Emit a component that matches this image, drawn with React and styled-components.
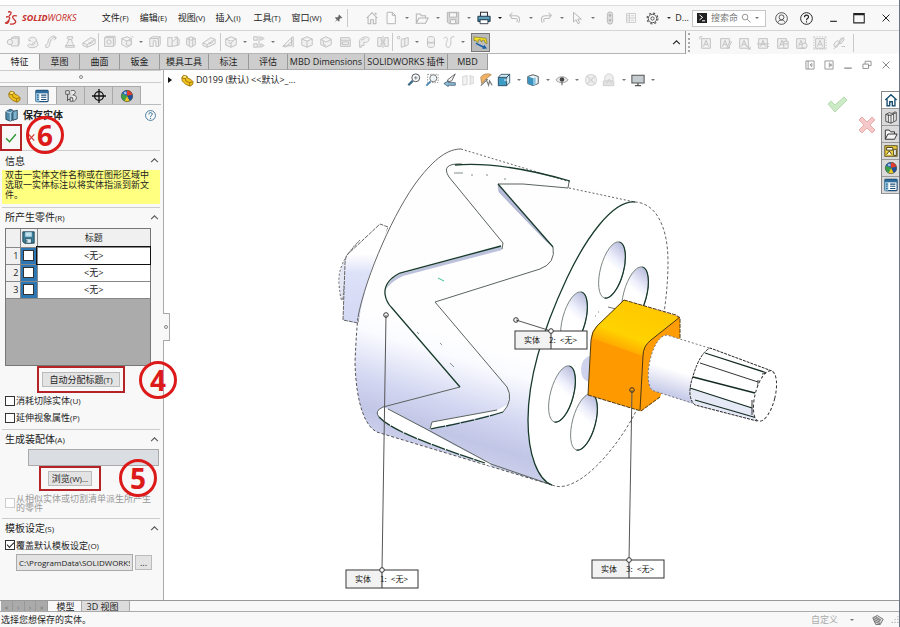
import React from "react";
import styled, { createGlobalStyle, css } from "styled-components";

const sans = '"Open Sans", "Noto Sans CJK SC", sans-serif';

const GlobalStyle = createGlobalStyle`
  *, *::before, *::after { box-sizing: border-box; }
  body { margin: 0; background: #fff; color: #222; font: 9px/12px ${sans}; }
  button, input { font: inherit; color: inherit; }
  h1, h2, p { margin: 0; font: inherit; }
`;

/* ---------- drawings ---------- */

const g = "#c2c2c2";
const ball = (
  <>
    <circle cx="8" cy="8" r="6.5" fill="#2f8f3f" />
    <path d="M8 8 2 5.500A6.500 6.500 0 0 1 8 1.500z" fill="#2b66c0" />
    <path d="M8 8V1.500A6.500 6.500 0 0 1 14.300 6.500z" fill="#e23a2c" />
    <path d="M8 8l6.300-1.500A6.500 6.500 0 0 1 11 13.800z" fill="#1f4f9c" />
    <path d="M8 8l3 5.800A6.500 6.500 0 0 1 5 13.800z" fill="#f2c522" />
    <path d="M2 5.500 8 8l-3 5.800A6.500 6.500 0 0 1 2 5.500z" fill="#3ba24a" />
    <circle cx="6" cy="4.500" r="1.500" fill="#fff" opacity=".6" />
    <circle cx="8" cy="8" r="6.500" fill="none" stroke="#555" strokeWidth=".7" />
  </>
);
const list = (
  <>
    <rect x="1" y="1.500" width="14" height="13" rx="1" fill="#fff" stroke="#1e4f78" strokeWidth="1.300" />
    <path d="M1 2h14v3H1z" fill="#2e6e9e" />
    <path d="M1 5h4v9.500H1z" fill="#8fc0dd" />
    <path d="M2.500 7h1.500M2.500 9.500h1.500M2.500 12h1.500M7 7h6M7 9.500h6M7 12h6" stroke="#1e4f78" strokeWidth="1.200" />
  </>
);
const part = (
  <>
    <path d="M2 5.500 4 2.500l4 1 1 2.500 3 1 3 3-.5 3-3 2-5-2-4-4z" fill="#f0c11d" stroke="#8f6a07" strokeWidth=".9" />
    <path d="M2 5.500l4 1 1 3 4 1.500 3.500-1M11 11v4M6 6.500 8 3.500" fill="none" stroke="#8f6a07" strokeWidth=".9" />
    <path d="M3.500 5 5 3.200l2.500.6L6 5.800z" fill="#ffe98a" />
  </>
);
const folder = "M1.500 14V3.500h4.500l1.500 2H12v2.500M1.500 14 4.500 8H15l-3 6z";
const cube = "M8 2l6 2.500v7L8 14l-6-2.500v-7zM2 4.500 8 7l6-2.500M8 7v7";
const note = (extra) => (
  <>
    <path d="M3 3h10v11H3z" />
    <path d="M5 12 8 5l3 7M6 9.500h4" />
    {extra}
  </>
);

const LINE = {
  boss: <><path d="M6 3.500h8v9H6zM6 3.500 9 2h6v9l-1 1.500" /><path d="M1 8h6M5 6l2 2-2 2" /><circle cx="4.500" cy="8" r="3" /></>,
  revolve: <><path d="M4 6c0-4 9-5 9 0 0 3-5 2-5 5M4 6l3 1M13 6l2 5c-1 4-11 5-12 1l2-2c2 2 6 2 6-1" /></>,
  sweep: <path d="M2 14c5 1 4-3 5-6s3-6 7-5M2 11c3 0 2-2 3-5s4-5 7-5M2 11v3M12 1l2 2-2 3" />,
  loft: <path d="M5 2h6v2l-1 1c0 4 1 5 3 7v2H3v-2c2-2 3-3 3-7L5 4zM3 12h10M6 5h4" />,
  slab: <path d="M1 9 10 3l5 2v5l-9 4-5-2zM1 9l5 2 9-6M6 11v3M8 8a2 1.500 0 1 0 3-1" />,
  cut: <><path d="M3 3h10v10H3zM3 3l2-1.500h10V11l-2 2" /><circle cx="8" cy="8" r="2.500" /></>,
  hole: <><path d="M8 2l5 2v7l-5 3-6-3V4zM2 4l6 3 5-3" /><circle cx="10" cy="9" r="3" /><path d="M13 1l2 2" /></>,
  arch: <path d="M2 13V4l3-2h9v9l-2 2H9V7c0-1-3-1-3 0v6zM2 4h10v9M12 4l2-2" />,
  draft: <path d="M2 13V3h5v10zM7 8l6-5v9l-6 1M9 3l4-1M13 3l2 2v6l-2 1" />,
  rib: <path d="M3 4l5-2 5 2v7l-5 3-5-3zM6 3v10M10 3v10M3 4l5 2 5-2" />,
  cube: <path d={cube} />,
  cubeR: <><path d={cube} /><path d="M5 8l2 2 4-4" /></>,
  pattern: <path d="M2 2h4v4H2zM2 10h4v4H2zM10 2l4 2-4 2zM10 10l4 2-4 2zM8 1v14" />,
  wing: <path d="M2 13 12 3v9zM5 14l9-8v8M12 3l2-1v4M4 11v3" />,
  shell: <><path d="M2 5l6-3 6 3v6l-6 3-6-3zM2 5l6 3 6-3" /><path d="M5 7v4l3 1.500" /></>,
  wrap: <path d="M3 3h10l1 2v8H3zM3 6h11M5 8h7v3H5zM3 9h2" />,
  flag: <path d="M3 14V6c2-4 9-5 11-2-1 5-4 5-6 4v4H5v2zM5 6l4-2" />,
  mirror: <path d="M2 3v10h4V9h4v4h4V3h-4v4H6V3zM8 1v14" />,
  plane: <><circle cx="3" cy="3" r="1.500" /><path d="M6 5l4-1v9l-4 1zM10 4l4-1v8l-4 2" /></>,
  cyl: <path d="M4 4c0-3 8-3 8 0v8c0 3-8 3-8 0zM4 7c0 2 8 2 8 0M4 9h8" />,
  curve: <path d="M2 4c2-3 5-1 4 2s-3 8 1 8 3-6 3-9 2-3 4-3" fill="none" />,
  a1: note(<path d="M1 1h3M1 1v3" />),
  a2: note(<path d="M10 13l4-7 1.500 1-4 7z" />),
  a3: note(<path d="M10 10l5 5M15 12v3h-3" />),
  a4: note(<path d="M1 9h14M12 12h3" />),
  a5: note(<path d="M10 6h5v8h-5zM10 9h5" />),
  a6: note(<><circle cx="12" cy="11" r="3" /><path d="M6 14h6" /></>),
  a7: note(<path d="M1 1v14M15 1v14M1 1h14M1 15h14" strokeDasharray="1.500 1.500" />),
  link: <path d="M3 8l3-3 3 3-4 5-3-2zM8 6l3-4 3 2-4 5zM2 15 14 1M11 12h4" />,
};

const ART = {
  home: <path d="M2 8l6-6 6 6M3.500 7v7.500h3V10h3v4.500h3V7M11 2.500h1.500v2" fill="none" stroke="#b5b5b5" strokeWidth="1.200" />,
  doc: <path d="M3.500 1.500h6l3.500 3.500v9.500h-9.500zM9.500 1.500V5H13" fill="#fafafa" stroke="#b5b5b5" strokeWidth="1.100" />,
  open: <path d={folder} fill="none" stroke="#b5b5b5" strokeWidth="1.200" />,
  save: <><path d="M1.500 1.500h13v13h-11l-2-2z" fill="#d8d8d8" stroke="#b0b0b0" /><path d="M4 2h8v5H4zM5 10h6v4.500H5z" fill="#f6f6f6" stroke="#b0b0b0" /></>,
  print: <><path d="M4 6V1.500h8V6" fill="#eef6fb" stroke="#333" strokeWidth="1.200" /><path d="M1 6h14v6H1z" fill="#2f7ea0" stroke="#253240" /><path d="M3.500 10h9v4.500h-9z" fill="#fff" stroke="#253240" /><path d="M2 8h12" stroke="#9fd0e4" /></>,
  undo: <path d="M5 2 2 5l3 4M2.500 5.500H9c5 0 5 5 3 8M5 8.500h4c2 0 2 2 1 4" fill="none" stroke="#bdbdbd" strokeWidth="1.200" />,
  redo: <path d="M11 2l3 3-3 4M13.500 5.500H7c-5 0-5 5-3 8M11 8.500H7c-2 0-2 2-1 4" fill="none" stroke="#bdbdbd" strokeWidth="1.200" />,
  cursor: <path d="M4 1.500v11l3-2.500 2 4.500 2-1-2-4.200h4z" fill="none" stroke="#b5b5b5" strokeWidth="1.100" />,
  traffic: <><rect x="5" y="1" width="6" height="14" rx="3" fill="#ddd" stroke="#b5b5b5" /><circle cx="8" cy="5" r="1.500" fill="#b5b5b5" /><circle cx="8" cy="10.500" r="1.500" fill="#b5b5b5" /></>,
  sheet: <path d="M2 2h12v12H2zM6 2v12M2 5h4M2 8h12M2 11h4M8 5h4M8 11h4" fill="none" stroke="#c2c2c2" />,
  gear: <><circle cx="8" cy="8" r="5.200" fill="none" stroke="#555" strokeWidth="1.200" /><circle cx="8" cy="8" r="6.700" fill="none" stroke="#555" strokeWidth="1.400" strokeDasharray="2.600 2.660" /><circle cx="8" cy="8" r="2" fill="none" stroke="#555" strokeWidth="1.200" /></>,
  term: <><rect width="16" height="16" fill="#222" /><path d="M4 3l5 4-5 4M8 12.500h5" fill="none" stroke="#fff" strokeWidth="1.600" /></>,
  search: <><circle cx="6.500" cy="6.500" r="4.500" fill="none" stroke="#777" strokeWidth="1.200" /><path d="M10 10l5 5" stroke="#777" strokeWidth="1.300" /></>,
  user: <><circle cx="8" cy="8" r="7.200" fill="none" stroke="#444" strokeWidth="1.100" /><circle cx="8" cy="6.500" r="3" fill="none" stroke="#444" strokeWidth="1.100" /><path d="M3.500 13c1-4 8-4 9 0" fill="none" stroke="#444" strokeWidth="1.100" /></>,
  help: <><circle cx="8" cy="8" r="7.200" fill="none" stroke="currentColor" strokeWidth="1.200" /><path d="M5.500 6.500c0-3.500 5-3.500 5-.5 0 2-2.500 2-2.500 4M8 11.500v1.500" fill="none" stroke="currentColor" strokeWidth="1.400" /></>,
  min: <path d="M2 13h12" stroke="currentColor" strokeWidth="2" />,
  max: <path d="M1 2h14v12.500H1zM1 3.500h14" fill="none" stroke="currentColor" strokeWidth="1.400" />,
  close: <path d="M2.500 2.500l11 11M13.500 2.500l-11 11" stroke="currentColor" strokeWidth="1.600" />,
  restore: <path d="M1.500 6.500h9v7h-9zM5 6.500v-4.500h9.500v7h-4" fill="none" stroke="currentColor" strokeWidth="1.400" />,
  dockL: <path d="M1.500 1.500h13v13h-13zM5 1.500v13M11 5.500v5L8 8z" fill="none" stroke="currentColor" strokeWidth="1.300" />,
  dockR: <path d="M1.500 1.500h13v13h-13zM8.500 4v8M9 8h4M11 5.500v5" fill="none" stroke="currentColor" strokeWidth="1.300" />,
  pin: <path d="M9 1l6 6-1.500.5-1.500-.5-2.500 2.500.5 3-1.500 1L5.500 10.500 1 15l3.800-5.200L2 7l1-1.500 3 .5L8.500 3.500 8 2z" fill="#666" />,
  measure: <><path d="M1 2l13 1.500 1 5.500-2-.5-1-3h-2l-1 2-1-2.500H6L5 8 3 5.500 1 6z" fill="#f4e02c" stroke="#7c731b" strokeWidth=".7" /><path d="M3 8l8.500 4 .5-1.500 3 4-5 .5.5-1.500L3 9.500z" fill="#1a5fa8" /></>,
  part, list, ball,
  config: <path d="M2 2h4v4H2zM4 6v8M4 12h3M7 10h3v4H7zM8 2c3-1 5 0 5 2s-3 2-3 3c2 0 5 1 4 4s-3 3-4 3" fill="#eee" stroke="#555" strokeWidth="1.100" />,
  target: <><circle cx="8" cy="8" r="5" fill="none" stroke="#111" strokeWidth="1.500" /><path d="M8 0v16M0 8h16" stroke="#111" strokeWidth="1.500" /></>,
  saveBody: <><path d="M1 4l5-2.500 4 1.500v10l-4 2-5-2z" fill="#4d88a8" stroke="#24455a" /><path d="M6 5.500v9.500M1 4l5 1.500L10 3" fill="none" stroke="#cfe5f0" /><path d="M9 4l5-1.500v10L9 14z" fill="#7fb3cd" stroke="#24455a" /></>,
  tick: <path d="M1.500 8.500l4.500 4.500L14.500 3" fill="none" stroke="#2e9a35" strokeWidth="1.900" />,
  cross: <path d="M3 2.500l10 11M13 2.500l-10 11" stroke="#d23a36" strokeWidth="2.200" />,
  chevron: <path d="M2 11l6-6 6 6" fill="none" stroke="currentColor" strokeWidth="1.900" />,
  floppy: <><path d="M1 1h14v14H3l-2-2z" fill="#3b7c99" stroke="#14384a" /><path d="M4 1.500h8V7H4z" fill="#bfe0ec" /><path d="M4.500 9.500h7v5.500h-7z" fill="#d9eef5" stroke="#14384a" strokeWidth=".8" /><path d="M6 11v3" stroke="#14384a" /></>,
  zoomFit: <><circle cx="10" cy="5.500" r="4.500" fill="#f3f8fb" stroke="#555" strokeWidth="1.100" /><path d="M6.500 9 1.500 14" stroke="#3d6a88" strokeWidth="2.600" /><path d="M10 3.500v4M8 5.500h4" stroke="#777" /></>,
  zoomArea: <><path d="M3 1.500h12v9.500H3z" fill="none" stroke="#888" strokeDasharray="1.500 1.500" /><circle cx="9.500" cy="6" r="4" fill="#eef5f9" stroke="#777" strokeWidth="1.100" /><path d="M6.500 9.500 1.500 14.500" stroke="#4a88b0" strokeWidth="2.200" /></>,
  zoomPrev: <><path d="M14 1 5 8l1 2 4-1z" fill="#f4f4f4" stroke="#666" strokeWidth="1.100" /><path d="M1 12l5-3v2h8v3H6v1.500z" fill="#8fbdd6" stroke="#3b5a70" strokeWidth=".9" /></>,
  section: <path d="M2 4l5-1v10l-5 1zM9 3l5 1v8l-5 1M11 4v8" fill="#f2f2f2" stroke="#d0d0d0" />,
  paint: <><path d="M2 5c2-4 9-5 12-3L10 5 6 9 3 12z" fill="#f0b267" stroke="#a5743c" strokeWidth=".8" /><path d="M2 14.500 10 7M8 7l3 7 1-5 3 5" fill="none" stroke="#777" strokeWidth="1.300" /></>,
  orient: <><path d="M1.500 5h9.500v9.500H1.500z" fill="#3f9cc4" stroke="#24455a" /><path d="M1.500 5l3-3.500h10L11 5zM14.500 1.500V11L11 14.500V5z" fill="#cfe8f1" stroke="#24455a" strokeWidth=".9" /><path d="M8 8h5M11.500 6.500 13 8l-1.500 1.500" fill="none" stroke="#fff" /></>,
  shade: <><path d="M2 4l6-2 6 2v8l-6 2.500L2 12z" fill="#e9f5fb" stroke="#444" /><path d="M2 4l6 2v8.500L2 12z" fill="#3c94be" /><path d="M8 6l3-1v8.500l-3 1z" fill="#88c2de" /></>,
  eye: <><path d="M1 8c3-5 11-5 14 0-3 4-11 4-14 0z" fill="#e8e8e8" stroke="#999" /><circle cx="8" cy="7.500" r="2.600" fill="#444" /><path d="M8 10v4" stroke="#666" strokeWidth="1.300" /></>,
  ballGrey: <><circle cx="8" cy="8" r="6.500" fill="#ececec" stroke="#d2d2d2" /><path d="M3 3l10 10M13 3 3 13" stroke="#d2d2d2" strokeWidth="1.500" /></>,
  sceneGrey: <><circle cx="8" cy="6" r="5" fill="#eee" stroke="#cecece" /><path d="M1.500 9h12v5.500h-12zM5 12l3-5 3 5" fill="#e2e2e2" stroke="#cecece" /></>,
  monitor: <><path d="M1 2.500h14v9H1z" fill="#c6cdd1" stroke="#555" strokeWidth="1.200" /><path d="M8 11.500V14M4.500 14.500h7" stroke="#555" strokeWidth="1.500" /></>,
  paneHome: <path d="M1.500 8 8 2l6.500 6M3.500 7v7.500h3V10h3v4.500h3V7" fill="#fff" stroke="#1d4f70" strokeWidth="1.600" />,
  books: <path d="M2 5l4-2 3 1 4-2 1 1v9l-6 3-6-2zM5 5v9M8 6v9M11 4v9M2 5l3 1 3 0 6-3" fill="#eee" stroke="#333" strokeWidth=".9" />,
  paneFolder: <path d={folder} fill="#f4f4f4" stroke="#333" strokeWidth="1.100" />,
  board: <><rect x="1" y="2" width="14" height="12" fill="#f0cf3f" stroke="#4c431a" /><path d="M3 4h7v3H3zM3 12l3-4 3 4M11 6v7h3V6z" fill="#fff" stroke="#4c431a" strokeWidth="1.100" /></>,
  gem: <path d="M1 5l6-3 8 5-4 7-6 0zM3 5l8 4M5 4l7 4M2 7l9 4M3 10l8 3" fill="#ddd" stroke="#555" strokeWidth="1" />,
  grip: <path d="M14 2v2M14 7v2M14 12v2M9 7v2M9 12v2M4 12v2" stroke="#bbb" strokeWidth="2.500" />,
};

const Svg = styled.svg`
  display: block;
  flex: none;
  width: ${(p) => p.$size}px;
  height: ${(p) => p.$size}px;
`;

function Icon({ name, size = 14 }) {
  const line = LINE[name];
  return (
    <Svg viewBox="0 0 16 16" $size={size} aria-hidden="true">
      {line ? <g fill="#f0f0f0" stroke={g} strokeWidth="1.100">{line}</g> : ART[name]}
    </Svg>
  );
}

/* ---------- shared controls ---------- */

const bare = css`
  padding: 0;
  border: 0;
  background: none;
`;
const IconButton = styled.button`
  ${bare}
  display: flex;
  flex: none;
  align-items: center;
  justify-content: center;
  width: ${(p) => p.$w || 18}px;
  height: 18px;
  color: ${(p) => p.$color || "#222"};
`;
const CaretButton = styled.button`
  ${bare}
  flex: none;
  width: ${(p) => p.$w || 10}px;
  height: 18px;
  &::before {
    content: "";
    display: block;
    width: 4px;
    margin: 0 auto;
    border: 2px solid transparent;
    border-top-color: ${(p) => p.$color || "#777"};
    border-bottom: 0;
  }
`;
const Divider = styled.span`
  flex: none;
  width: 1px;
  height: 18px;
  margin: 0 ${(p) => p.$after || 0}px 0 ${(p) => p.$before || 0}px;
  background: #c9c9c9;
`;
const Spacer = styled.span`
  flex: 1;
`;
const Key = styled.span`
  font-size: 8px;
`;

/* ---------- frame ---------- */

const Window = styled.div`
  display: flex;
  flex-direction: column;
  min-height: 100vh;
  padding-top: 5px;
  border-right: 1px solid #6c7380;
  background: #fff;
`;
const TitleBar = styled.header`
  display: flex;
  align-items: center;
  height: 26px;
  border-top: 1px solid #dcdcdc;
  border-bottom: 1px solid #d4d4d4;
  background: #f8f8f8;
`;
const Brand = styled.div`
  display: flex;
  align-items: center;
  gap: 4px;
  width: 96px;
  padding-left: 4px;
  color: #c8332f;
  font: italic 9px/14px "Noto Sans", sans-serif;
  b { font-weight: 700; }
`;
const Logo = styled.svg`
  width: 14px;
  height: 15px;
`;
const MenuButton = styled.button`
  ${bare}
  width: 38px;
  padding-left: 6px;
  text-align: left;
  white-space: nowrap;
`;
const Group = styled.div`
  display: flex;
  align-items: center;
  padding-left: ${(p) => p.$pad || 0}px;
`;
const SearchBox = styled.label`
  display: flex;
  align-items: center;
  width: 74px;
  height: 17px;
  margin: 0 7px 0 3px;
  padding: 0 2px 0 4px;
  border: 1px solid #c6c6c6;
  background: #fff;
  input {
    flex: 1;
    min-width: 0;
    padding: 0 0 0 4px;
    border: 0;
    outline: 0;
    background: none;
  }
  input::placeholder { color: #777; }
`;
const ToolBar = styled.div`
  display: flex;
  align-items: stretch;
  height: 23px;
  background: #f8f8f8;
`;
const FeatureTools = styled.div`
  display: flex;
  flex: 1;
  align-items: center;
  padding-left: 3px;
  border-right: 1px solid #999;
  border-bottom: 1px solid #b5b5b5;
`;
const AnnotationTools = styled.div`
  display: flex;
  align-items: center;
  width: 213px;
  &::before {
    content: "";
    height: 19px;
    margin: 0 6px 0 2px;
    border-left: 2px dotted #aaa;
  }
`;
const ActiveTool = styled(IconButton)`
  width: 19px;
  height: 19px;
  margin-left: 3px;
  border: 1px solid #777;
  background: #bcbcbc;
`;
const TabRow = styled.nav`
  display: flex;
  align-items: stretch;
  height: 16px;
`;
const CommandTab = styled.button`
  padding: 0;
  width: ${(p) => p.$w}px;
  border: 0;
  border-right: 1px solid #999;
  border-bottom: 1px solid ${(p) => (p.$active ? "#f8f8f8" : "#aaa")};
  background: ${(p) => (p.$active ? "#f8f8f8" : "#cdcdcd")};
  line-height: 14px;
  white-space: nowrap;
`;
const DocControls = styled.div`
  display: flex;
  align-items: flex-end;
  gap: 1px;
  margin-left: auto;
  padding-right: 4px;
  ${IconButton} { height: 10px; }
`;
const Main = styled.div`
  display: flex;
  flex: 1;
`;

/* ---------- property panel ---------- */

const Panel = styled.aside`
  position: relative;
  z-index: 1;
  flex: none;
  width: 164px;
  border-right: 1px solid #aaa;
  background: #f8f8f8;
`;
const PanelGrip = styled.div`
  display: flex;
  align-items: center;
  justify-content: center;
  height: 13px;
  margin-right: 2px;
  border-top: 1px solid #ccc;
  border-bottom: 1px solid #ccc;
`;
const Dot = styled.i`
  flex: none;
  width: 4px;
  height: 4px;
  border: 1px solid #888;
  border-radius: 50%;
`;
const PanelTabs = styled.div`
  display: flex;
  margin: 3px 2px 0 0;
  border-bottom: 1px solid #bbb;
`;
const PanelTab = styled.button`
  display: flex;
  align-items: center;
  justify-content: center;
  width: ${(p) => (p.$active ? 29 : 28)}px;
  height: 18px;
  padding: 0;
  border: 1px solid #aaa;
  border-width: 1px 1px 0 0;
  background: ${(p) => (p.$active ? "#f8f8f8" : "#d0d0d0")};
`;
const PanelTitle = styled.div`
  display: flex;
  align-items: center;
  height: 20px;
  padding: 0 7px 0 5px;
  h1 {
    flex: 1;
    padding-left: 4px;
    font-size: 10px;
    font-weight: 700;
  }
`;
const ActionRow = styled.div`
  position: relative;
  display: flex;
  align-items: center;
  height: 25px;
  ${IconButton} { width: 18px; }
`;
const Highlight = styled.div`
  position: relative;
  z-index: 1;
  display: flex;
  flex: none;
  align-items: center;
  justify-content: center;
  width: ${(p) => p.$w}px;
  height: ${(p) => p.$h || 27}px;
  margin-left: ${(p) => p.$left || 0}px;
  border: 2px solid #b52326;
`;
const Step = styled.span`
  position: absolute;
  z-index: 2;
  top: ${(p) => p.$top}px;
  left: ${(p) => p.$left}px;
  width: 38px;
  height: 38px;
  border: 3px solid #dc1a1a;
  border-radius: 50%;
  color: #dc1a1a;
  font: 700 28px/32px "Noto Sans", sans-serif;
  text-align: center;
`;
const Section = styled.section`
  position: relative;
  height: ${(p) => p.$h}px;
  margin: 0 3px 0 2px;
  border-top: 1px solid #ccc;
`;
const SectionHead = styled.div`
  display: flex;
  align-items: center;
  justify-content: space-between;
  height: 19px;
  padding-left: 3px;
  h2 { font-size: 10px; }
  ${IconButton} { width: 12px; }
`;
const Message = styled.div`
  height: 34px;
  padding: 0 3px;
  background: #ffff80;
  line-height: 10px;
`;
const TableFrame = styled.div`
  width: 146px;
  height: 138px;
  margin: 1px 0 0 3px;
  border: 1px solid #777;
  background: #ababab;
`;
const BodyTable = styled.table`
  width: 100%;
  border-collapse: collapse;
  table-layout: fixed;
  background: #fff;
  th, td {
    height: 17px;
    padding: 0;
    border: 1px solid #888;
    border-width: 0 1px 1px 0;
    font-weight: 400;
    line-height: 12px;
    text-align: center;
  }
  tr > :last-child { border-right: 0; }
  thead th, tbody th { background: #f0f0f0; }
  thead th { height: 18px; }
  tbody th { padding-right: 1px; text-align: right; }
  tbody tr:first-child td:last-child { outline: 1px solid #111; }
`;
const IndexCol = styled.col`
  width: 14px;
`;
const SaveCol = styled.col`
  width: 17px;
`;
const SaveCell = styled.td`
  background: #2e77b5;
`;
const HeadIcon = styled.div`
  display: flex;
  justify-content: center;
`;
const Check = styled.input.attrs({ type: "checkbox" })`
  appearance: none;
  display: block;
  flex: none;
  width: ${(p) => p.$size || 10}px;
  height: ${(p) => p.$size || 10}px;
  margin: ${(p) => (p.$size ? "0 auto" : "0")};
  border: 1px solid #333;
  background: #fff;
  &:disabled { border-color: #ccc; }
  &:checked::after {
    content: "";
    display: block;
    width: 7px;
    height: 4px;
    margin: 1px 0 0 1px;
    border: solid #222;
    border-width: 0 0 1px 1px;
    transform: rotate(-45deg);
  }
`;
const CheckLine = styled.label`
  display: flex;
  align-items: center;
  gap: 1px;
  height: ${(p) => p.$h || 17}px;
  padding: 0 8px 0 3px;
  color: ${(p) => (p.$muted ? "#999" : "inherit")};
  line-height: 9px;
`;
const PushButton = styled.button`
  width: ${(p) => p.$w}px;
  height: 15px;
  padding: 0;
  border: 1px solid #bbb;
  background: #e3e3e3;
  line-height: 12px;
  white-space: nowrap;
`;
const TextField = styled.input`
  display: block;
  width: ${(p) => p.$w}px;
  height: 17px;
  margin-left: ${(p) => p.$left || 0}px;
  padding: 0 2px;
  border: 1px solid #aaa;
  background: ${(p) => p.$bg || "#e3e3e3"};
  font-size: 8px;
`;
const PathRow = styled.div`
  display: flex;
  align-items: center;
  gap: 2px;
  padding: 2px 0 0 14px;
`;
const Collapse = styled.button`
  ${bare}
  position: absolute;
  top: 243px;
  right: -7px;
  display: flex;
  align-items: center;
  justify-content: center;
  width: 7px;
  height: 28px;
  border: 1px solid #aaa;
  border-left: 0;
  background: #f8f8f8;
`;

/* ---------- graphics area ---------- */

const Viewport = styled.main`
  position: relative;
  flex: 1;
  min-width: 0;
  background: #fff;
`;
const ViewHeader = styled.div`
  display: grid;
  grid-template-columns: 1fr auto 1fr;
  align-items: center;
  height: 20px;
`;
const TreeRoot = styled.div`
  display: flex;
  align-items: center;
  gap: 2px;
  padding-left: 4px;
  white-space: nowrap;
  &::before {
    content: "";
    margin-right: 6px;
    border: 3px solid transparent;
    border-left: 4px solid #111;
    border-right: 0;
  }
`;
const Scene = styled.svg`
  display: block;
  width: 100%;
  height: auto;
`;
const TaskPane = styled.div`
  position: absolute;
  top: 21px;
  right: 0;
  width: 18px;
  border: 1px solid #888;
  border-width: 1px 0 0 1px;
`;
const PaneButton = styled.button`
  ${bare}
  display: flex;
  align-items: center;
  justify-content: center;
  width: 17px;
  height: 17px;
  border-bottom: 1px solid #999;
  background: ${(p) => (p.$active ? "#fff" : "#dadada")};
`;
const Confirm = styled.div`
  position: absolute;
  top: 24px;
  right: 22px;
  display: grid;
  grid-template-columns: 30px 20px;
  grid-template-rows: 20px 22px;
  align-items: center;
  button { ${bare} }
  button:last-child { grid-area: 2 / 2; }
`;
const Mark = styled.svg`
  display: block;
  width: 20px;
  height: 18px;
`;

/* ---------- bottom bars ---------- */

const BottomTabs = styled.nav`
  display: flex;
  height: 12px;
  border-top: 1px solid #999;
  border-bottom: 1px solid #aaa;
  background: #f8f8f8;
`;
const PageNav = styled.div`
  display: flex;
  width: 47px;
  margin-left: 1px;
  background: #aaa;
`;
const PageButton = styled.button`
  ${bare}
  flex: 1;
  border-right: 1px solid #999;
  color: #777;
  font-size: 8px;
  line-height: 9px;
`;
const BottomTab = styled.button`
  ${bare}
  width: ${(p) => p.$w}px;
  padding-left: ${(p) => (p.$active ? 2 : 0)}px;
  padding-right: ${(p) => (p.$active ? 0 : 6)}px;
  border-right: 1px solid #aaa;
  background: ${(p) => (p.$active ? "#f8f8f8" : "#dcdcdc")};
  line-height: 9px;
`;
const StatusBar = styled.footer`
  display: flex;
  align-items: center;
  height: 15px;
  padding-left: 1px;
  background: #f8f8f8;
`;
const Units = styled.button`
  ${bare}
  color: #aaa;
`;

/* ---------- data ---------- */

const MENUS = [["文件", "F"], ["编辑", "E"], ["视图", "V"], ["插入", "I"], ["工具", "T"], ["窗口", "W"]];
const QUICK = [["doc", "新建"], ["open", "打开"], ["save", "保存"], ["print", "打印"], ["undo", "撤消"], ["redo", "重做"], ["cursor", "选择"]];
const TOOL_GROUPS = [
  { w: 19, items: ["boss", "revolve", "sweep", "loft", "slab"] },
  { w: 18, items: ["cut", "hole", null, "arch", "draft", "rib", "slab"] },
  { w: 18, items: ["cubeR", null, "pattern", null] },
  { w: 19, items: ["wing", "cube", "shell", "wrap", "flag", "mirror"] },
  { w: 18, items: ["plane", null, "cyl", "curve", null] },
];
const NOTES = ["a1", "a2", "a3", "a4", "a5", "a6", "a7", "link"];
const TABS = [["特征", 40], ["草图", 40], ["曲面", 40], ["钣金", 40], ["模具工具", 49], ["标注", 40], ["评估", 39], ["MBD Dimensions", 77], ["SOLIDWORKS 插件", 83], ["MBD", 40]];
const VIEW = ["zoomFit", "zoomArea", "zoomPrev", "section", "paint", "orient", null, "shade", null, "eye", null, "ballGrey", "sceneGrey", null, "monitor", null];
const PANE = ["paneHome", "books", "paneFolder", "board", "ball", "list"];

/* ---------- model ---------- */

const HOLES = [[612, 270], [635, 295], [574, 320], [562, 394], [584, 422]];
const CALLOUTS = [
  { n: 1, x: 346, y: 570, split: 382, from: [386, 315] },
  { n: 2, x: 515, y: 331, split: 551, from: [516, 320] },
  { n: 3, x: 592, y: 560, split: 629, from: [632, 390] },
];

function Model() {
  return (
    <Scene viewBox="164 90 735 509" role="img" aria-label="D0199">
      <defs>
        <linearGradient id="body" gradientUnits="userSpaceOnUse" x1="450" y1="335" x2="412" y2="462">
          <stop offset="0" stopColor="#fefeff" />
          <stop offset=".15" stopColor="#fafbff" />
          <stop offset=".5" stopColor="#d2d6f1" />
          <stop offset=".72" stopColor="#c2c6e6" />
          <stop offset="1" stopColor="#d3d7ef" />
        </linearGradient>
        <linearGradient id="hole" x1=".6" y1="0" x2=".4" y2="1">
          <stop offset="0" stopColor="#b6bada" />
          <stop offset=".3" stopColor="#eceefb" />
          <stop offset=".45" stopColor="#fff" />
        </linearGradient>
        <linearGradient id="gold" gradientUnits="userSpaceOnUse" x1="636" y1="300" x2="612" y2="362">
          <stop offset="0" stopColor="#ffc800" />
          <stop offset=".55" stopColor="#ffd200" />
          <stop offset=".85" stopColor="#ff9a00" />
        </linearGradient>
        <linearGradient id="shaft" gradientUnits="userSpaceOnUse" x1="680" y1="340" x2="663" y2="398">
          <stop offset=".5" stopColor="#fff" />
          <stop offset="1" stopColor="#bcc0e4" />
        </linearGradient>
        <linearGradient id="stub" x1="0" y1="0" x2="0" y2="1">
          <stop offset=".3" stopColor="#fff" />
          <stop offset=".5" stopColor="#dde1f8" />
          <stop offset="1" stopColor="#d3d8f4" />
        </linearGradient>
      </defs>

      <g stroke="#666" strokeWidth="1">
        <path d="M360 240Q337 262 339 284T343 298L347 255z" fill="#e4e6f4" strokeDasharray="2 2" />
        <path d="M388 227 380 224 347 255Q345 259 345 264L343 320 358 323z" fill="url(#stub)" strokeDasharray="4 1" />
      </g>

      <path d="M461 149C432 148 408 188 387 230 367 272 355 325 355 362 356 405 366 430 380 433L552 485 635 202z" fill="url(#body)" />
      <path d="M552 485 380 433C366 430 356 405 355 362 356 340 357 325 358 317" fill="none" stroke="#555" strokeDasharray="3 2" />
      <path d="M358 317C366 275 395 210 418 180 435 158 448 149 461 149" fill="none" stroke="#666" />
      <path d="M461 149 570 182M569 188 635 202" fill="none" stroke="#666" strokeDasharray="2 2" />

      <path d="M383 407Q374 411 379 417C393 432 440 448 490 466L491 463C455 447 430 431 388 409z" fill="#fff" />
      <path d="M432 422 497 410 509 404 503 412 430 429z" fill="#fff" />
      <path d="M400 274 501 246 502 250 403 276Q392 281 386 289 389 279 400 274z" fill="#bcc2dc" />
      <path d="M498 185 551 245 546 241 499 192z" fill="#b7bcdb" stroke="#8f95b5" strokeWidth=".5" />

      <g fill="none" stroke="#5b645e" strokeWidth="1">
        <path d="M462 164Q440 163 449 177L503 243 502 249M569 182 568 188 523 184 498 184" />
        <path d="M553 247Q556 263 540 269L435 302 507 387Q514 400 503 412" />
        <path d="M460 387 383 407Q374 411 379 417M388 409 430 431 491 464 552 485M430 429 432 422 497 410" />
      </g>
      <g fill="none" stroke="#173a2a" strokeWidth="1.300">
        <path d="M455 165Q500 161 570 181M498 184 553 247M501 246 400 273Q384 281 385 294 386 302 392 308L460 387" />
        <path d="M379 417C393 432 440 448 485 463M503 412Q470 422 430 429" strokeDasharray="14 1" />
      </g>
      <path d="M454 173h9M471 175h2M486 175h2M504 179h2M450 363l4 4M440 343l2 2M417 332l2 2" stroke="#62766f" strokeWidth=".8" />
      <path d="M438 278l6 3" stroke="#36bd98" />

      <path d="M635 202C612 200 585 240 567 278 545 325 528 375 528 420 528 460 540 487 562 487 585 487 612 455 633 417 655 375 668 310 668 262 668 225 655 203 635 202z" fill="#fff" />
      <path d="M635 202C612 200 585 240 567 278 545 325 528 375 528 420 528 455 538 480 552 485" fill="none" stroke="#173a2a" strokeWidth="1.300" />
      <path d="M552 485C575 495 612 455 633 417 655 375 668 310 668 262 668 225 655 203 635 202" fill="none" stroke="#666" strokeDasharray="3 2" />
      {HOLES.map(([x, y]) => (
        <g key={`${x}-${y}`} transform={`rotate(15 ${x} ${y})`}>
          <ellipse cx={x} cy={y} rx="11.500" ry="29" fill="url(#hole)" stroke="#7a847e" strokeWidth=".9" />
          <path d={`M${x} ${y - 29}a11.500 29 0 0 1 0 58`} fill="none" stroke="#173a2a" strokeWidth="1.200" />
        </g>
      ))}
      <path d="M592 355Q581 358 581 369T589 382z" fill="#cfd2ec" />
      <path d="M608 307l8 2M598 312h1M595 316h1" stroke="#777" />

      <path d="M624 300 680 317V338L660 397 641 411 588 395 591 340Q592 331 597 326z" fill="#ff9900" />
      <path d="M624 300 675 316Q680 318 676 321L651 340Q645 346 643 356L591 338Q592 331 597 326z" fill="url(#gold)" />
      <path d="M680 317 680 338 660 397 641 411 643 353Q645 345 651 340z" fill="#ff9c06" />
      <g fill="none" stroke="#4d3a12" strokeWidth="1">
        <path d="M680 317 651 340Q643 346 643 356L640 410M588 395 591 340Q592 331 597 326L624 300" />
        <path d="M588 395 641 411 660 397M624 300 676 315 680 318V338" strokeDasharray="4 1" />
      </g>
      <path d="M667 335C650 336 642 388 654 391L697 405 709 348z" fill="url(#shaft)" />
      <path d="M709 348 667 335C650 336 642 388 654 391L692 403" fill="none" stroke="#777" strokeDasharray="2 2" />
      <path d="M710 348 770 370 757 421 695 405Q686 397 693 376 700 353 710 348z" fill="#fff" />
      <path d="M690 388 755 408 757 421 695 405Q690 400 690 388z" fill="#e5e8f5" />
      <path d="M772 371 710 348Q700 353 693 376 686 397 695 405L757 421" fill="none" stroke="#222" strokeDasharray="3 1" />
      <path d="M705 353 767 373M693 377 755 393M690 388 752 408M695 400 757 418" stroke="#142b20" strokeWidth="1.300" />
      <path d="M700 363 758 382M758 380V390M752 400V415M762 374 768 373" stroke="#333" strokeWidth="1" />
      <ellipse cx="765" cy="396" rx="10" ry="26" transform="rotate(14 765 396)" fill="#fff" stroke="#333" strokeDasharray="3 2" />

      {CALLOUTS.map(({ n, x, y, split, from }) => (
        <g key={n} stroke="#333" strokeWidth="1">
          <path d={`M${from[0]} ${from[1]}L${split} ${y}`} stroke="#555" />
          <rect x={x} y={y} width="72" height="18" fill="#fff" />
          <rect x={x + 1} y={y + 1} width={split - x - 1} height="16" fill="#f2f2f2" stroke="none" />
          <g stroke="none" fill="#111" fontFamily='"Noto Sans CJK SC", sans-serif' fontSize="8">
            <text x={x + 9} y={y + 12}>实体</text>
            <text x={x + 34} y={y + 12}>{n}:</text>
            <text x={x + 45} y={y + 12}>&lt;无&gt;</text>
          </g>
          <path d={`M${split} ${y}v18`} />
          <circle cx={from[0]} cy={from[1]} r="2.300" fill="none" />
          <circle cx={split} cy={y} r="2.300" fill="#fff" />
        </g>
      ))}
    </Scene>
  );
}

/* ---------- page parts ---------- */

function Head({ title, hot }) {
  return (
    <SectionHead>
      <h2>{title}{hot && <Key>({hot})</Key>}</h2>
      <IconButton aria-label={`折叠${title}`} $color="#555"><Icon name="chevron" size={9} /></IconButton>
    </SectionHead>
  );
}

function PropertyPanel() {
  return (
    <Panel>
      <PanelGrip><Dot /></PanelGrip>
      <PanelTabs>
        {["part", "list", "config", "target", "ball"].map((name) => (
          <PanelTab key={name} aria-label={name} $active={name === "list"}><Icon name={name} /></PanelTab>
        ))}
      </PanelTabs>
      <PanelTitle>
        <Icon name="saveBody" />
        <h1>保存实体</h1>
        <IconButton $w={11} $color="#2d6a92" aria-label="帮助"><Icon name="help" size={11} /></IconButton>
      </PanelTitle>
      <ActionRow>
        <Highlight $w={22}><IconButton aria-label="确定"><Icon name="tick" size={12} /></IconButton></Highlight>
        <IconButton aria-label="取消"><Icon name="cross" size={9} /></IconButton>
        <Step $top={-9} $left={26}>6</Step>
      </ActionRow>

      <Section $h={57}>
        <Head title="信息" />
        <Message><p>双击一实体文件名称或在图形区域中选取一实体标注以将实体指派到新文件。</p></Message>
      </Section>

      <Section $h={222}>
        <Head title="所产生零件" hot="R" />
        <TableFrame>
          <BodyTable>
            <colgroup><IndexCol /><SaveCol /><col /></colgroup>
            <thead>
              <tr><th /><th><HeadIcon><Icon name="floppy" size={13} /></HeadIcon></th><th>标题</th></tr>
            </thead>
            <tbody>
              {[1, 2, 3].map((n) => (
                <tr key={n}>
                  <th>{n}</th>
                  <SaveCell><Check $size={11} aria-label={`保存实体 ${n}`} /></SaveCell>
                  <td>&lt;无&gt;</td>
                </tr>
              ))}
            </tbody>
          </BodyTable>
        </TableFrame>
        <Highlight $w={88} $left={35}><PushButton $w={78}>自动分配标题<Key>(T)</Key></PushButton></Highlight>
        <Step $top={153} $left={137}>4</Step>
        <CheckLine $h={15}><Check /><span>消耗切除实体<Key>(U)</Key></span></CheckLine>
        <CheckLine $h={19}><Check /><span>延伸视象属性<Key>(P)</Key></span></CheckLine>
      </Section>

      <Section $h={89}>
        <Head title="生成装配体" hot="A" />
        <TextField $w={131} $left={26} $bg="#dadde1" disabled aria-label="装配体" />
        <Highlight $w={62} $h={25} $left={37}><PushButton $w={44}>浏览<Key>(W)...</Key></PushButton></Highlight>
        <Step $top={29} $left={117}>5</Step>
        <CheckLine $h={23} $muted><Check disabled /><span>从相似实体或切割清单派生所产生的零件</span></CheckLine>
      </Section>

      <Section $h={60}>
        <Head title="模板设定" hot="S" />
        <CheckLine $h={14}><Check defaultChecked /><span>覆盖默认模板设定<Key>(O)</Key></span></CheckLine>
        <PathRow>
          <TextField $w={117} defaultValue="C:\ProgramData\SOLIDWORKS" aria-label="模板路径" />
          <PushButton $w={17}>...</PushButton>
        </PathRow>
      </Section>
      <Collapse aria-label="收起面板"><Dot /></Collapse>
    </Panel>
  );
}

export default function App() {
  return (
    <Window>
      <GlobalStyle />
      <TitleBar>
        <Brand>
          <Logo viewBox="0 0 14 15" aria-hidden="true">
            <path d="M4 1c4-1 4 1 1 4M1 12c3-1 6-5 4-6-1-1-2 0-3 0M1 12c2 1 4 0 4-3M13 5c-3-1-5 0-4 2s4 3 2 5-4 1-5 1" fill="none" stroke="#c8332f" strokeWidth="1.300" />
          </Logo>
          <span><b>SOLID</b>WORKS</span>
        </Brand>
        {MENUS.map(([text, key]) => (
          <MenuButton key={key}>{text}<Key>({key})</Key></MenuButton>
        ))}
        <Group $pad={6}>
          <IconButton aria-label="固定"><Icon name="pin" size={9} /></IconButton>
          <Divider $after={13} />
          <IconButton $w={21} aria-label="主页"><Icon name="home" /></IconButton>
          {QUICK.map(([name, label]) => (
            <React.Fragment key={name}>
              <IconButton aria-label={label}><Icon name={name} /></IconButton>
              <CaretButton $w={13} aria-label={`${label}选项`} $color={name === "print" ? "#111" : "#777"} />
            </React.Fragment>
          ))}
        </Group>
        <Spacer />
        <IconButton $w={21} aria-label="重建"><Icon name="traffic" /></IconButton>
        <IconButton $w={21} aria-label="属性"><Icon name="sheet" size={12} /></IconButton>
        <IconButton $w={22} aria-label="选项"><Icon name="gear" size={13} /></IconButton>
        <CaretButton $w={12} aria-label="选项菜单" $color="#333" />
        <span>D...</span>
        <SearchBox>
          <Icon name="term" size={10} />
          <input placeholder="搜索命" aria-label="搜索命令" />
          <Icon name="search" size={10} />
          <CaretButton $w={12} aria-label="搜索范围" />
        </SearchBox>
        <IconButton aria-label="登录"><Icon name="user" size={13} /></IconButton>
        <IconButton $w={32} aria-label="帮助"><Icon name="help" size={13} /></IconButton>
        <IconButton $w={21} aria-label="最小化"><Icon name="min" size={9} /></IconButton>
        <IconButton $w={30} aria-label="最大化"><Icon name="max" size={12} /></IconButton>
        <IconButton $w={25} aria-label="关闭"><Icon name="close" size={10} /></IconButton>
      </TitleBar>

      <ToolBar>
        <FeatureTools>
          {TOOL_GROUPS.map(({ w, items }, i) => (
            <React.Fragment key={i}>
              {i > 0 && i !== 3 && <Divider $after={1} $before={i === 2 ? 2 : 0} />}
              {items.map((name, j) =>
                name ? (
                  <IconButton key={j} $w={w} aria-label={name}><Icon name={name} /></IconButton>
                ) : (
                  <CaretButton key={j} aria-label="更多" />
                )
              )}
            </React.Fragment>
          ))}
          <ActiveTool aria-label="Instant3D"><Icon name="measure" size={15} /></ActiveTool>
          <Spacer />
          <IconButton aria-label="折叠工具栏"><Icon name="chevron" size={9} /></IconButton>
        </FeatureTools>
        <AnnotationTools>
          {NOTES.map((name) => (
            <IconButton key={name} $w={19} aria-label={name}><Icon name={name} /></IconButton>
          ))}
          <Divider $before={5} />
        </AnnotationTools>
      </ToolBar>

      <TabRow>
        {TABS.map(([text, w], i) => (
          <CommandTab key={text} $w={w} $active={i === 0}>{text}</CommandTab>
        ))}
        <DocControls>
          {["dockL", "dockR", "min", "restore", "close"].map((name) => (
            <IconButton key={name} $color="#888" aria-label={name}><Icon name={name} size={10} /></IconButton>
          ))}
        </DocControls>
      </TabRow>

      <Main>
        <PropertyPanel />
        <Viewport>
          <ViewHeader>
            <TreeRoot><Icon name="part" /><span>D0199 (默认) &lt;&lt;默认&gt;_...</span></TreeRoot>
            <Group>
              {VIEW.map((name, i) =>
                name ? (
                  <IconButton key={i} aria-label={name}><Icon name={name} /></IconButton>
                ) : (
                  <CaretButton key={i} $w={11} aria-label="更多" />
                )
              )}
            </Group>
          </ViewHeader>
          <Model />
          <Confirm>
            <button aria-label="确认">
              <Mark viewBox="0 0 20 18"><path d="M1 9l3-3 4 4 9-8 3 3L8 17z" fill="#cdeac7" stroke="#b5dcae" /></Mark>
            </button>
            <button aria-label="放弃">
              <Mark viewBox="0 0 20 18"><path d="M2 4l3-3 5 5 5-5 3 3-5 5 5 5-3 3-5-5-5 5-3-3 5-5z" fill="#f6c9c9" stroke="#e8adad" /></Mark>
            </button>
          </Confirm>
          <TaskPane>
            {PANE.map((name, i) => (
              <PaneButton key={name} $active={i === 0} aria-label={name}><Icon name={name} /></PaneButton>
            ))}
          </TaskPane>
        </Viewport>
      </Main>

      <BottomTabs>
        <PageNav>
          {["«", "‹", "›", "»"].map((c) => <PageButton key={c}>{c}</PageButton>)}
        </PageNav>
        <BottomTab $w={34} $active>模型</BottomTab>
        <BottomTab $w={48}>3D 视图</BottomTab>
      </BottomTabs>
      <StatusBar>
        <span>选择您想保存的实体。</span>
        <Spacer />
        <Units>自定义</Units>
        <CaretButton $w={28} aria-label="单位" />
        <IconButton $w={24} aria-label="标签"><Icon name="gem" size={12} /></IconButton>
        <Icon name="grip" size={9} />
      </StatusBar>
    </Window>
  );
}
